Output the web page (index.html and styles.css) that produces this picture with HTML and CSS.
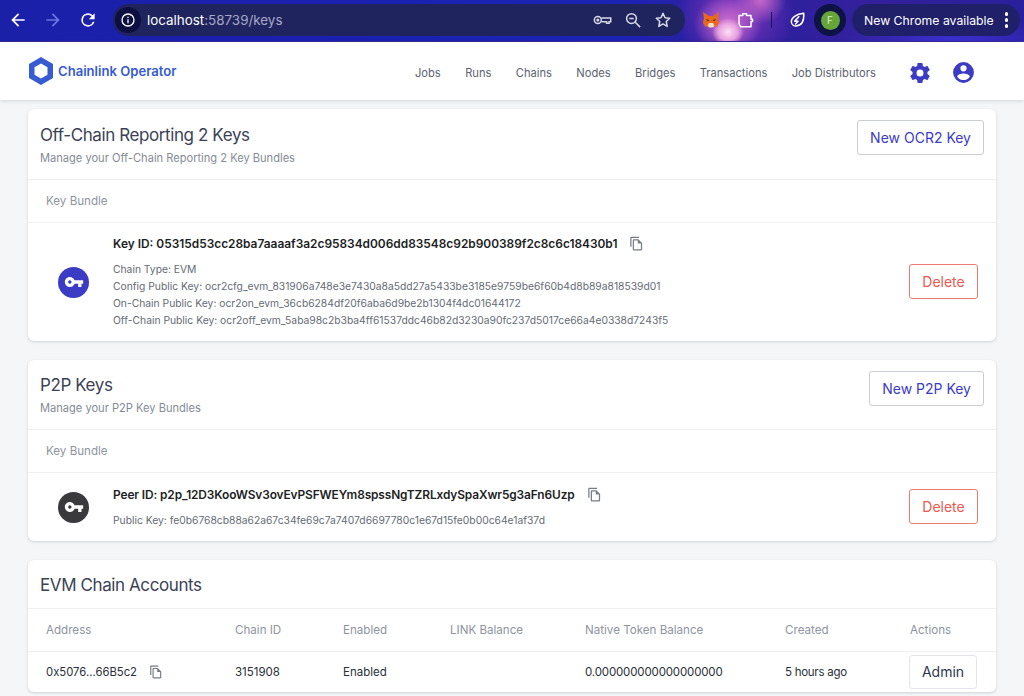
FILE: index.html
```html
<!DOCTYPE html>
<html lang="en">

<head>
    <title>Chainlink Operator - Keys</title>
    <link rel="stylesheet" href="styles.css">
</head>

<body>

    <svg class="icon-defs" width="0" height="0">
        <symbol id="key" viewBox="0 0 24 24"><path d="M12.65 10C11.83 7.67 9.61 6 7 6c-3.31 0-6 2.69-6 6s2.69 6 6 6c2.61 0 4.83-1.67 5.65-4H17v4h4v-4h2v-4H12.65zM7 14c-1.1 0-2-.9-2-2s.9-2 2-2 2 .9 2 2-.9 2-2 2z"/></symbol>
        <symbol id="copy" viewBox="0 0 24 24"><path d="M16 1H4c-1.1 0-2 .9-2 2v14h2V3h12V1zm-1 4H8c-1.1 0-2 .9-2 2v14c0 1.1.9 2 2 2h11c1.1 0 2-.9 2-2V11l-6-6zM8 21V7h6v5h5v9H8z"/></symbol>
    </svg>

    <div class="browser-bar">
        <svg class="tb-icon" viewBox="0 0 24 24" fill="#fff"><path d="M20 11H7.83l5.59-5.59L12 4l-8 8 8 8 1.41-1.41L7.83 13H20v-2z"/></svg>
        <svg class="tb-icon" viewBox="0 0 24 24" fill="#6f74e0"><path d="M12 4l-1.41 1.41L16.17 11H4v2h12.17l-5.58 5.59L12 20l8-8z"/></svg>
        <svg class="tb-icon tb-reload" viewBox="0 0 24 24" fill="#fff"><path d="M17.65 6.35A7.95 7.95 0 0 0 12 4a8 8 0 1 0 7.73 10h-2.08A6 6 0 1 1 12 6c1.66 0 3.14.69 4.22 1.78L13 11h7V4l-2.35 2.35z"/></svg>

        <div class="omnibox">
            <span class="site-info">
                <svg width="16" height="16" viewBox="0 0 24 24" fill="#fff"><path d="M11 7h2v2h-2zm0 4h2v6h-2zm1-9a10 10 0 1 0 0 20 10 10 0 0 0 0-20zm0 18a8 8 0 1 1 0-16 8 8 0 0 1 0 16z"/></svg>
            </span>
            <span class="url">localhost<span class="url-rest">:58739/keys</span></span>
            <span class="omni-icons">
                <svg width="20" height="20" viewBox="0 0 24 24" fill="none" stroke="#d6d8e6" stroke-width="1.8"><circle cx="7" cy="12" r="4.2"/><circle cx="7" cy="12" r="1" fill="#d6d8e6"/><path d="M11.2 9.5H22.5V14h-2v1.8h-3V14h-6"/></svg>
                <svg width="18" height="18" viewBox="0 0 24 24" fill="none" stroke="#d6d8e6" stroke-width="2"><circle cx="10" cy="10" r="6.5"/><path d="M15 15l6.5 6.5M7 10h6"/></svg>
                <svg width="18" height="18" viewBox="0 0 24 24" fill="none" stroke="#d6d8e6" stroke-width="2" stroke-linejoin="round"><path d="M12 3l2.7 6 6.3.7-4.7 4.3 1.3 6.5L12 17.2 6.4 20.5l1.3-6.5L3 9.7 9.3 9z"/></svg>
            </span>
        </div>

        <div class="ext-icons">
            <svg class="ext-fox" width="20" height="18" viewBox="0 0 20 18"><path d="M2 1l6 4h4l6-4-1 6 1 5-2.500 4-4-1.500h-3l-4 1.500L2 12l1-5z" fill="#e8691c"/><path d="M6.500 15l1.500-3h4l1.500 3-2 1.500h-3z" fill="#f4dcc4"/><path d="M5 8l3 1-1 1.500zM15 8l-3 1 1 1.500z" fill="#3a2a20"/></svg>
            <svg class="ext-puzzle" width="18" height="20" viewBox="0 0 24 24" fill="none" stroke="#fff" stroke-width="2" stroke-linejoin="round"><path d="M4 6h5V3.500h5V6h6v5h2v3h-2v7H6l-2-4z"/></svg>
            <span class="ext-sep"></span>
            <svg width="18" height="18" viewBox="0 0 24 24" fill="none" stroke="#fff" stroke-width="2" stroke-linejoin="round"><path d="M21 3c.5 8-1 16-10 17-3 .3-6-2-6.500-5C4 9 11 4 21 3z"/><path d="M15 7l-6 6.500h4.500L9.500 18" fill="none" stroke-width="2"/></svg>
            <span class="avatar-ring"><span class="avatar">F</span></span>
        </div>

        <div class="update-pill">
            <span>New Chrome available</span>
            <span class="dots"><i></i><i></i><i></i></span>
        </div>
    </div>

    <nav class="topnav">
        <div class="brand">
            <svg width="24" height="28" viewBox="0 0 24 28"><path fill-rule="evenodd" d="M12 0l12 7v14l-12 7-12-7V7zM12 6.500L5.500 10.200v7.600L12 21.500l6.500-3.700v-7.600z" fill="#375bd2"/></svg>
            <span>Chainlink Operator</span>
        </div>
        <div class="nav-links">
            <a>Jobs</a>
            <a>Runs</a>
            <a>Chains</a>
            <a>Nodes</a>
            <a>Bridges</a>
            <a>Transactions</a>
            <a>Job Distributors</a>
        </div>
        <div class="nav-icons">
            <svg width="24" height="24" viewBox="0 0 24 24" fill="#3c3bc4"><path d="M19.43 12.98c.04-.32.07-.64.07-.98s-.03-.66-.07-.98l2.11-1.650c.19-.15.24-.42.12-.64l-2-3.460c-.12-.22-.39-.3-.61-.22l-2.490 1c-.52-.4-1.080-.73-1.690-.98l-.38-2.650A.49.49 0 0 0 14 2h-4c-.25 0-.46.18-.49.42l-.38 2.650c-.61.25-1.170.59-1.690.98l-2.490-1c-.23-.09-.49 0-.61.22l-2 3.460c-.13.22-.07.49.12.64l2.110 1.650c-.04.32-.07.65-.07.98s.03.66.07.98l-2.110 1.650c-.19.15-.24.42-.12.64l2 3.460c.12.22.39.3.61.22l2.490-1c.52.4 1.080.73 1.690.98l.38 2.650c.03.24.24.42.49.42h4c.25 0 .46-.18.49-.42l.38-2.650c.61-.25 1.170-.59 1.690-.98l2.490 1c.23.09.49 0 .61-.22l2-3.460c.12-.22.07-.49-.12-.64l-2.110-1.650zM12 15.500a3.500 3.500 0 1 1 0-7 3.500 3.500 0 0 1 0 7z"/></svg>
            <svg width="25" height="25" viewBox="0 0 24 24" fill="#3c3bc4"><path d="M12 2a10 10 0 1 0 0 20 10 10 0 0 0 0-20zm0 3a3 3 0 1 1 0 6 3 3 0 0 1 0-6zm0 14.200a7.200 7.200 0 0 1-6-3.220c.03-1.990 4-3.080 6-3.080s5.970 1.090 6 3.080a7.200 7.200 0 0 1-6 3.220z"/></svg>
        </div>
    </nav>

    <main class="content">

        <section class="card">
            <div class="card-head card-head-first">
                <div>
                    <h2>Off-Chain Reporting 2 Keys</h2>
                    <p class="subtitle">Manage your Off-Chain Reporting 2 Key Bundles</p>
                </div>
                <button class="btn btn-new">New OCR2 Key</button>
            </div>
            <div class="col-head">Key Bundle</div>
            <div class="key-row key-row-ocr">
                <span class="key-badge badge-blue"><svg width="20" height="20"><use href="#key"/></svg></span>
                <div class="key-info">
                    <div class="key-id">Key ID: 05315d53cc28ba7aaaaf3a2c95834d006dd83548c92b900389f2c8c6c18430b1
                        <svg class="copy-icon" width="15" height="15"><use href="#copy"/></svg>
                    </div>
                    <div class="key-details">
                        <div>Chain Type: EVM</div>
                        <div>Config Public Key: ocr2cfg_evm_831906a748e3e7430a8a5dd27a5433be3185e9759be6f60b4d8b89a818539d01</div>
                        <div>On-Chain Public Key: ocr2on_evm_36cb6284df20f6aba6d9be2b1304f4dc01644172</div>
                        <div>Off-Chain Public Key: ocr2off_evm_5aba98c2b3ba4ff61537ddc46b82d3230a90fc237d5017ce66a4e0338d7243f5</div>
                    </div>
                </div>
                <button class="btn btn-delete">Delete</button>
            </div>
        </section>

        <section class="card">
            <div class="card-head">
                <div>
                    <h2>P2P Keys</h2>
                    <p class="subtitle">Manage your P2P Key Bundles</p>
                </div>
                <button class="btn btn-new">New P2P Key</button>
            </div>
            <div class="col-head">Key Bundle</div>
            <div class="key-row key-row-p2p">
                <span class="key-badge badge-dark"><svg width="20" height="20"><use href="#key"/></svg></span>
                <div class="key-info">
                    <div class="key-id">Peer ID: p2p_12D3KooWSv3ovEvPSFWEYm8spssNgTZRLxdySpaXwr5g3aFn6Uzp
                        <svg class="copy-icon" width="15" height="15"><use href="#copy"/></svg>
                    </div>
                    <div class="key-details">
                        <div>Public Key: fe0b6768cb88a62a67c34fe69c7a7407d6697780c1e67d15fe0b00c64e1af37d</div>
                    </div>
                </div>
                <button class="btn btn-delete">Delete</button>
            </div>
        </section>

        <section class="card">
            <div class="card-head card-head-small">
                <h2>EVM Chain Accounts</h2>
            </div>
            <div class="accounts accounts-head">
                <span>Address</span>
                <span>Chain ID</span>
                <span>Enabled</span>
                <span>LINK Balance</span>
                <span>Native Token Balance</span>
                <span>Created</span>
                <span>Actions</span>
            </div>
            <div class="accounts accounts-row">
                <span class="address">0x5076...66B5c2 <svg class="copy-icon" width="14" height="14"><use href="#copy"/></svg></span>
                <span>3151908</span>
                <span>Enabled</span>
                <span></span>
                <span class="balance">0.000000000000000000</span>
                <span class="created">5 hours ago</span>
                <span><button class="btn btn-admin">Admin</button></span>
            </div>
        </section>

    </main>

</body>
</html>
```

FILE: styles.css
```css
* {
    box-sizing: border-box;
}

body {
    margin: 0;
    height: 696px;
    overflow: hidden;
    background-color: #f5f6f8;
    font-family: Inter, "Noto Sans", sans-serif;
    color: #1f2430;
}

.icon-defs {
    display: block;
}

/* browser chrome */
.browser-bar {
    height: 42px;
    display: flex;
    align-items: center;
    padding: 0 0 1px 8px;
    background:
        radial-gradient(ellipse 16px 14px at 728px 32px, #fbe0f4 0%, #e8a0e0 60%, transparent 100%),
        radial-gradient(ellipse 34px 30px at 728px 24px, #d070d0 0%, transparent 100%),
        radial-gradient(ellipse 26px 24px at 760px 0, #c868c8 0%, transparent 100%),
        radial-gradient(ellipse 60px 50px at 735px 14px, #8838c0 0%, transparent 100%),
        radial-gradient(ellipse 110px 30px at 950px 42px, #3a30d0 0%, transparent 100%),
        linear-gradient(90deg, #1a20a8 0%, #1c22b4 62%, #2a20a0 68%, #33209c 85%, #2a1f9c 100%);
    border-bottom: 1px solid #3a2a9a;
}

.tb-icon {
    width: 20px;
    height: 20px;
    margin-right: 15px;
    flex-shrink: 0;
}

.omnibox {
    width: 572px;
    height: 32px;
    flex-shrink: 0;
    border-radius: 16px;
    background-color: #20245e;
    display: flex;
    align-items: center;
}

.site-info {
    width: 26px;
    height: 26px;
    margin-left: 2px;
    border-radius: 50%;
    background-color: #0c0f40;
    display: flex;
    align-items: center;
    justify-content: center;
}

.url {
    margin-left: 6px;
    font-size: 13.4px;
    color: #fff;
    flex: 1;
}

.url-rest {
    color: #a5a8c8;
}

.omni-icons {
    display: flex;
    align-items: center;
    gap: 12px;
    padding-right: 13px;
}

.ext-icons {
    display: flex;
    align-items: center;
    flex-shrink: 0;
    margin-left: 16px;
    gap: 16px;
}

.ext-puzzle {
    margin-left: -1px;
}

.ext-sep {
    width: 1px;
    height: 16px;
    background-color: #161a50;
    margin-left: 1px;
}

.avatar-ring {
    width: 32px;
    height: 32px;
    margin-left: -8px;
    border-radius: 50%;
    background-color: #0e1244;
    display: flex;
    align-items: center;
    justify-content: center;
}

.avatar {
    width: 19px;
    height: 19px;
    border-radius: 50%;
    background-color: #66a638;
    color: #d8eecb;
    font-size: 10px;
    text-align: center;
    line-height: 19px;
}

.update-pill {
    width: 168px;
    height: 32px;
    flex-shrink: 0;
    margin-left: 6px;
    padding-left: 12px;
    border-radius: 16px;
    background-color: #20206a;
    color: #fff;
    font-size: 12.25px;
    display: flex;
    align-items: center;
    justify-content: space-between;
}

.dots {
    display: flex;
    flex-direction: column;
    gap: 2.5px;
    margin-right: 12px;
}

.dots i {
    width: 3.5px;
    height: 3.5px;
    border-radius: 50%;
    background-color: #fff;
}

/* app nav */
.topnav {
    height: 58px;
    background-color: #fff;
    display: flex;
    align-items: center;
    padding: 0 0 0 29px;
    box-shadow: 0 1px 4px rgba(0, 0, 0, 0.14);
    position: relative;
}

.brand {
    display: flex;
    align-items: center;
    gap: 5px;
    color: #375bd2;
    font-weight: 600;
    font-size: 13.1px;
    width: 386px;
}

.nav-links {
    display: flex;
    gap: 24.4px;
    font-size: 11.15px;
    color: #5c6270;
    width: 477px;
    margin-top: 3px;
    white-space: nowrap;
}

.nav-icons {
    display: flex;
    align-items: center;
    gap: 19px;
    margin-left: 16px;
    margin-top: 3px;
}

/* cards */
.content {
    padding: 9px 28px 0;
    display: flex;
    flex-direction: column;
    gap: 19px;
}

.card {
    background-color: #fff;
    border-radius: 6px;
    box-shadow: 0 1px 3px rgba(0, 0, 0, 0.16);
}

.card-head {
    height: 70px;
    padding: 0 12px;
    display: flex;
    align-items: center;
    justify-content: space-between;
    border-bottom: 1px solid #eff0f3;
}

.card-head-first {
    height: 71px;
}

.card-head-small {
    height: 49px;
}

h2 {
    margin: 1px 0 0;
    font-size: 17px;
    letter-spacing: -0.4px;
    font-weight: 400;
    color: #3b4256;
}

.subtitle {
    margin: 6px 0 0;
    font-size: 11.1px;
    color: #858b96;
}

.btn {
    font-family: inherit;
    background-color: #fff;
    border-radius: 3px;
    cursor: pointer;
}

.btn-new {
    height: 35px;
    padding: 0 12px;
    border: 1px solid #c9ccd4;
    color: #3c3bc4;
    font-size: 14px;
    margin-top: -13px;
}

.btn-delete {
    width: 69px;
    height: 35px;
    padding: 0;
    border: 1px solid #ec7a72;
    color: #ea5a4f;
    font-size: 14px;
    flex-shrink: 0;
}

.btn-admin {
    width: 68px;
    height: 34px;
    padding: 0;
    margin-left: -1px;
    border: 1px solid #e3e5ea;
    color: #2f3650;
    font-size: 14px;
}

.col-head {
    height: 43px;
    line-height: 43px;
    padding-left: 18px;
    font-size: 11.6px;
    color: #8e94a0;
    border-bottom: 1px solid #eff0f3;
}

.key-row {
    display: flex;
    align-items: center;
    padding: 0 18px 0 30px;
}

.key-row-ocr {
    height: 118px;
}

.key-row-ocr .key-info {
    padding-top: 1px;
}

.key-row-ocr .btn-delete {
    margin-top: -1px;
}

.key-row-p2p {
    height: 68px;
}

.key-row-p2p .key-info {
    padding-top: 2px;
}

.key-row-p2p .key-id {
    letter-spacing: -0.11px;
}

.key-row-p2p .btn-delete {
    margin-top: -2px;
}

.key-badge {
    width: 31px;
    height: 31px;
    border-radius: 50%;
    display: flex;
    align-items: center;
    justify-content: center;
    fill: #fff;
    flex-shrink: 0;
}

.badge-blue {
    background-color: #3c3bc4;
}

.badge-dark {
    background-color: #3a3a3c;
}

.key-info {
    flex: 1;
    margin-left: 24px;
}

.key-id {
    font-size: 11.9px;
    font-weight: 600;
    color: #1c1e24;
    display: flex;
    align-items: center;
    gap: 12px;
}

.copy-icon {
    fill: #777c85;
    flex-shrink: 0;
}

.key-details {
    margin-top: 10px;
    font-size: 10.3px;
    line-height: 16.8px;
    color: #666b75;
}

.accounts {
    display: grid;
    grid-template-columns: 189px 108px 107px 135px 200px 125px 1fr;
    align-items: center;
    padding-left: 18px;
    font-size: 11.6px;
}

.accounts-head {
    height: 43px;
    color: #8e94a0;
    border-bottom: 1px solid #eff0f3;
}

.accounts-row {
    height: 40px;
    padding-bottom: 1px;
    color: #2b2f38;
    font-size: 11.5px;
}

.balance {
    letter-spacing: -0.15px;
}

.created {
    letter-spacing: -0.27px;
}

.address {
    display: flex;
    align-items: center;
    gap: 12px;
    font-size: 11.3px;
}
```
